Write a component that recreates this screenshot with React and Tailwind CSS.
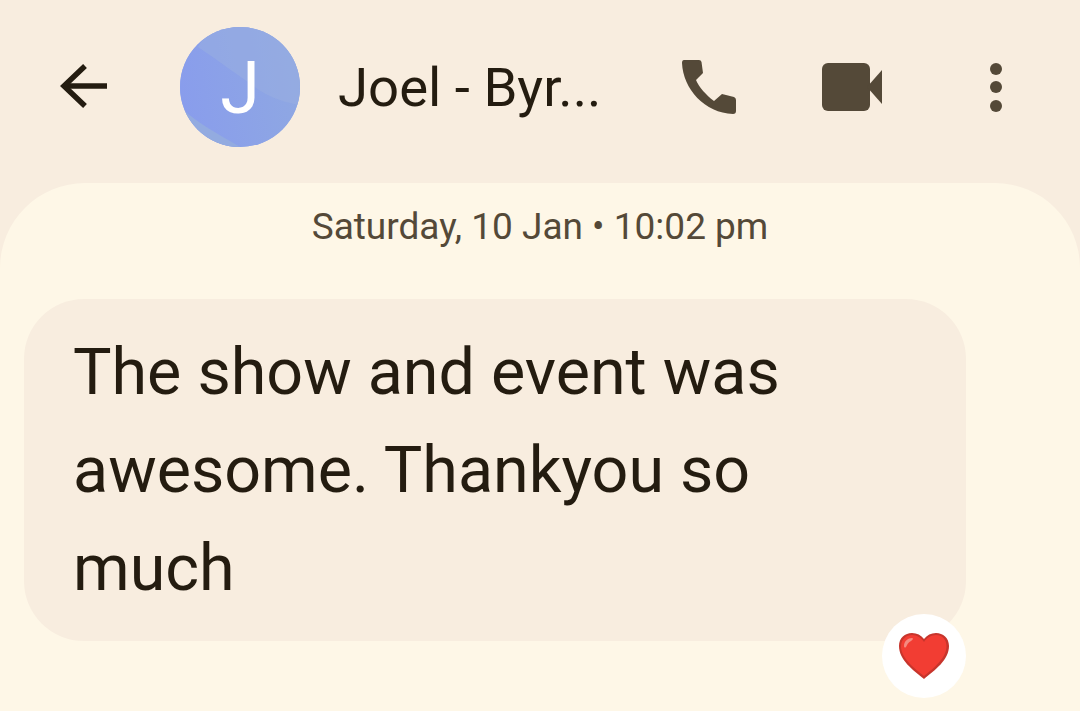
import React from 'react';

const BackIcon = () => (
	<svg className="w-[50px] h-[50px] shrink-0" viewBox="0 0 50 50" fill="none" stroke="#241c10" strokeWidth="5.5">
		<path d="M48 24H5" />
		<path d="M26 4 5 24l21 20" />
	</svg>
);

const Avatar = () => (
	<div className="relative w-[120px] h-[120px] shrink-0 rounded-full overflow-hidden bg-[#8fa8e6] flex items-center justify-center">
		<svg className="absolute inset-0 w-full h-full" viewBox="0 0 120 120">
			<defs>
				<linearGradient id="avatarWash" x1="0" y1="0.5" x2="1" y2="0.3">
					<stop offset="0" stopColor="#899dec" />
					<stop offset="1" stopColor="#8fa8e2" />
				</linearGradient>
			</defs>
			<path d="M0 0H120V120H0Z" fill="url(#avatarWash)" />
			<path d="M18 20C40 35 58 48 72 58C90 72 108 76 120 78V0H30Z" fill="#97aee1" opacity="0.6" />
			<path d="M0 80C20 98 40 108 60 120H0Z" fill="#93abe0" />
		</svg>
		<span className="relative text-white text-[72px] leading-none pt-[3px]">J</span>
	</div>
);

const PhoneIcon = () => (
	<svg className="w-[56px] h-[56px] shrink-0" viewBox="0 0 56 56" fill="#544938">
		<path d="M3 1H18Q20 1 20.500 3L22 14L15 21C18 28 25 36 33 42L41 35L53 38Q55 39 55 41V52Q55 55 52 55C24 54 2 30 1 4Q1 1 3 1Z" />
	</svg>
);

const VideoIcon = () => (
	<svg className="w-[60px] h-[48px] shrink-0" viewBox="0 0 60 48" fill="#544938">
		<rect x="0" y="0" width="48" height="48" rx="6" />
		<path d="M45 24 60 7V41Z" />
	</svg>
);

const DotsIcon = () => (
	<div className="flex flex-col gap-[6.5px] shrink-0">
		<span className="w-3 h-3 rounded-full bg-[#544938]" />
		<span className="w-3 h-3 rounded-full bg-[#544938]" />
		<span className="w-3 h-3 rounded-full bg-[#544938]" />
	</div>
);

const Heart = () => (
	<svg className="w-[52px] h-[48px]" viewBox="0 0 52 48">
		<path d="M26 47C15 38 1 28 1 14C1 6 7 1 14 1C19 1 23 3 26 7C29 3 33 1 38 1C45 1 51 6 51 14C51 28 37 38 26 47Z" fill="#c7352c" />
		<path d="M26 44C16 36 3 26 3 14.500C3 7.500 8 3 14 3C19 3 23.500 6 26 10C28.500 6 33 3 38 3C44 3 48.500 7.500 48.500 14C48.500 26 36 36 26 44Z" fill="#f23d33" />
		<path d="M6 14C6 9 10 6 14 6C15.500 6 15 8 13 9C10 10.500 9 13 8 15C7 16 6 15.500 6 14Z" fill="#f58a80" />
	</svg>
);

export default function App() {
	return (
		<div className="h-[711px] w-[1080px] overflow-hidden flex flex-col bg-[#f8eddf] font-['Roboto',sans-serif]">
			<header className="h-[183px] shrink-0 flex items-center pl-[59px] pb-[9px]">
				<BackIcon />
				<div className="ml-[71px]">
					<Avatar />
				</div>
				<span className="ml-[38px] w-[343px] text-[54.5px] leading-none text-[#241c10]">Joel - Byr...</span>
				<PhoneIcon />
				<div className="ml-[85px]">
					<VideoIcon />
				</div>
				<div className="ml-[108px]">
					<DotsIcon />
				</div>
			</header>
			<main className="flex-1 rounded-t-[85px] bg-[#fef7e7] px-6 pt-[22px]">
				<p className="text-center text-[37px] leading-[44px] text-[#544938]">Saturday, 10 Jan • 10:02 pm</p>
				<div className="relative mt-[50px] w-[942px] h-[342px] rounded-[60px] bg-[#f8eddf] pl-[49px] pt-6">
					<p className="text-[64.6px] leading-[98px] text-[#241c10] w-[780px]">The show and event was awesome. Thankyou so much</p>
					<div className="absolute right-0 -bottom-[57px] w-[84px] h-[84px] rounded-full bg-white flex items-center justify-center">
						<Heart />
					</div>
				</div>
			</main>
		</div>
	);
}
